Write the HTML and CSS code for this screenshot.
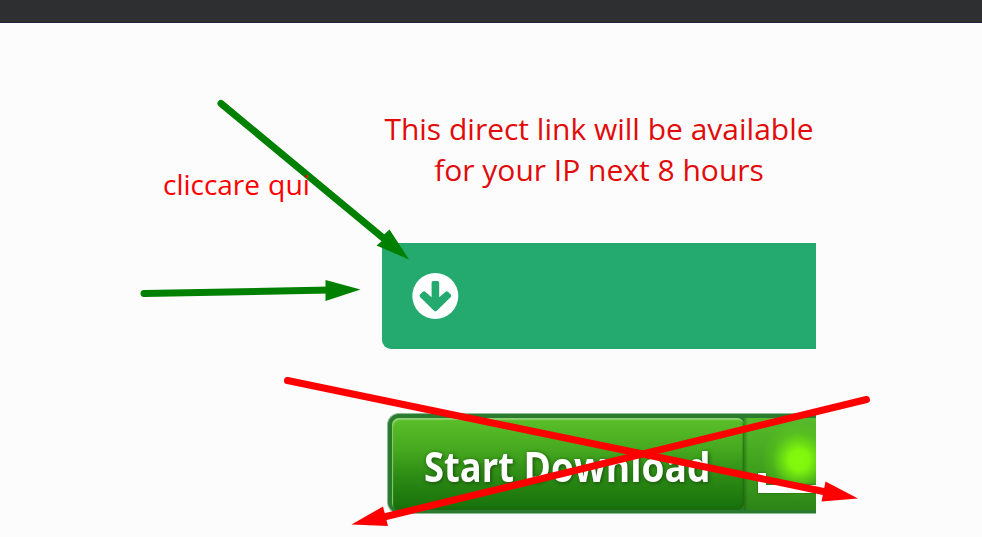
FILE: index.html
```html
<!DOCTYPE html>
<html lang="en">
<head>
<meta charset="utf-8">
<title>Download</title>
<link rel="stylesheet" href="styles.css">
</head>
<body>
<header class="topbar"></header>
<main class="content">
  <p class="notice">This direct link will be available<br>for your IP next 8 hours</p>
  <a class="direct" aria-label="Direct download">
    <svg width="47" height="46" viewBox="0 0 47 46">
      <circle cx="23.300" cy="23" r="23" fill="#fff"/>
      <path fill="#24a96e" d="M21.200 8h4.400q1.600 0 1.600 1.600V24.200l6.400-5.400q1.200-1 2.400 0l2.800 2.800q1 1.200 0 2.400L24.800 37.700q-1.400 1.100-2.800 0L8 24q-1-1.200 0-2.400l2.800-2.800q1.200-1 2.400 0l6.400 5.400V9.600q0-1.600 1.600-1.600z"/>
    </svg>
  </a>
  <div class="banner">
    <div class="banner-main">
      <svg width="352" height="92" viewBox="0 0 352 92">
        <g class="banner-label">
          <text x="32" y="63.500" textLength="90" lengthAdjust="spacingAndGlyphs">Start</text>
          <text x="131.500" y="63.500" textLength="187" lengthAdjust="spacingAndGlyphs">Download</text>
        </g>
      </svg>
    </div>
    <div class="banner-side">
      <svg width="72" height="92" viewBox="0 0 72 92">
        <path class="tray" d="M14 55h8v12h50v8H14z"/>
      </svg>
    </div>
  </div>
</main>
<svg class="marks" width="982" height="537" viewBox="0 0 982 537">
  <g stroke="#008000" fill="#008000" stroke-width="7" stroke-linecap="round">
    <path d="M221 103.500L388 242"/>
    <path d="M144 293.500L330 290"/>
    <path stroke="none" d="M409 259.500L376.500 245.500L383 240L384 234.500L389.500 229.500z"/>
    <path stroke="none" d="M360.500 289.500L325.500 280V301z"/>
  </g>
  <g stroke="#f00" fill="#f00" stroke-width="7" stroke-linecap="round">
    <path d="M287.500 380.500L826 492"/>
    <path d="M866.500 399.500L384 517"/>
    <path stroke="none" d="M858 498.500L821.500 501.500L825.500 481.500z"/>
    <path stroke="none" d="M351.500 524.500L383 506.500L388 526z"/>
  </g>
  <g class="hint">
    <text x="163" y="195" textLength="97" lengthAdjust="spacingAndGlyphs">cliccare</text>
    <text x="268" y="195" textLength="42" lengthAdjust="spacingAndGlyphs">qui</text>
  </g>
</svg>
</body>
</html>
```

FILE: styles.css
```css
* { box-sizing: border-box; }
body {
  margin: 0;
  height: 537px;
  overflow: hidden;
  background: #fcfcfc;
  font-family: "Open Sans", sans-serif;
}
.topbar {
  height: 23px;
  background: #2e2f31;
  border-bottom: 1px solid #22243f;
}
.content {
  width: 434px;
  margin-left: 382px;
  padding-top: 85px;
}
.notice {
  margin: 0;
  color: #e10b0b;
  font-size: 30px;
  line-height: 41px;
  text-align: center;
  white-space: nowrap;
}
.direct {
  display: flex;
  align-items: center;
  height: 106px;
  margin-top: 53px;
  padding-left: 30px;
  background: #24a96e;
  border-radius: 3px 0 0 9px;
}
.banner {
  display: flex;
  height: 101px;
  margin: 64px 0 0 5px;
  padding: 4px 0 3px 4px;
  background: #2a7a30;
  border: 1px solid #8dbb92;
  border-right: 0;
  border-radius: 12px 0 0 12px;
  overflow: hidden;
}
.banner-main {
  flex: 0 0 352px;
  height: 92px;
  background: linear-gradient(#5bc02a, #45a81f 35%, #2b8a14 65%, #17700b);
  border-radius: 7px;
  box-shadow: inset 1px 2px 1px #8bd06c, inset -1px -2px 2px #1d690f;
}
.banner-side {
  flex: 1;
  background: radial-gradient(circle at 55px 42px, #83fb0c 0, #7ff60d 10px, rgba(116, 236, 16, .65) 19px, rgba(110, 225, 20, .25) 27px, rgba(110, 225, 20, 0) 38px), linear-gradient(90deg, rgba(20, 80, 12, .45), rgba(20, 80, 12, 0) 4px), linear-gradient(#58bb2b, #43a51f 45%, #2c8517);
}
.banner svg { display: block; }
.banner-label {
  fill: #fff;
  font: bold 40.5px "Open Sans", sans-serif;
  filter: drop-shadow(1px 1px 2px #174b0a);
}
.tray {
  fill: #fff;
  filter: drop-shadow(0 0 1px #175c08);
}
.marks {
  position: absolute;
  top: 0;
  left: 0;
}
.hint {
  fill: #f00;
  font: 28px "Open Sans", sans-serif;
}
```
